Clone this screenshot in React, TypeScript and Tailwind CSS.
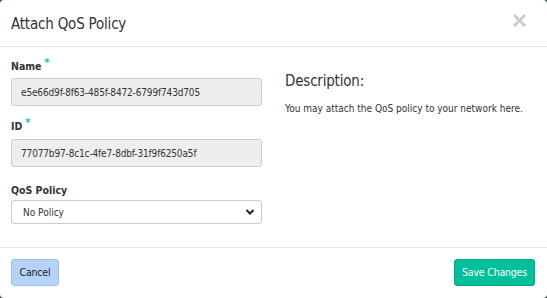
import React from "react";

const font = { fontFamily: '"DejaVu Sans Condensed", "Liberation Sans Narrow", "Liberation Sans", sans-serif' };

export default function App() {
  return (
    <div className="w-[547px] h-[298px] bg-[#2c4a48] overflow-hidden" style={font}>
      <div className="w-[547px] h-[298px] bg-white rounded-[4px] flex flex-col text-[#333333]">
        <div className="h-[47px] border-b border-[#e5e5e5] flex items-center justify-between pl-[11px] pr-[21px]">
          <h4 className="text-[15px] leading-[20px] pt-[2px] tracking-[-0.2px]">Attach QoS Policy</h4>
          <svg width="13" height="13" viewBox="0 0 13 13" className="mb-[5px]">
            <path d="M2 2 L11 11 M11 2 L2 11" stroke="#cccccc" strokeWidth="3" strokeLinecap="square" />
          </svg>
        </div>
        <div className="flex-1 flex px-[11px]">
          <div className="w-[251px] flex flex-col">
            <label className="mt-[12px] text-[10.5px] leading-[14px] font-semibold mb-[5px]">
              Name<span className="text-[#1abc9c] ml-[3px] relative top-[-4px]">*</span>
            </label>
            <div className="h-[28px] bg-[#eeeeee] border border-[#cccccc] rounded-[3px] flex items-center px-[9px] text-[10px] tracking-[-0.15px]">
              e5e66d9f-8f63-485f-8472-6799f743d705
            </div>
            <label className="mt-[13px] text-[10.5px] leading-[14px] font-semibold mb-[6px]">
              ID<span className="text-[#1abc9c] ml-[3px] relative top-[-4px]">*</span>
            </label>
            <div className="h-[28px] bg-[#eeeeee] border border-[#cccccc] rounded-[3px] flex items-center px-[9px] text-[10px] tracking-[-0.15px]">
              77077b97-8c1c-4fe7-8dbf-31f9f6250a5f
            </div>
            <label className="mt-[16px] text-[10.5px] leading-[14px] font-semibold mb-[3px]">QoS Policy</label>
            <div className="h-[24px] bg-white border border-[#cccccc] rounded-[3px] flex items-center justify-between pl-[11px] pr-[6px] text-[10px]">
              <span>No Policy</span>
              <svg width="10" height="8" viewBox="0 0 10 8">
                <path d="M1.5 2 L5 5.5 L8.5 2" fill="none" stroke="#222" strokeWidth="2" />
              </svg>
            </div>
          </div>
          <div className="ml-[23px] flex-1 flex flex-col">
            <h3 className="mt-[24px] text-[15px] leading-[20px] tracking-[-0.2px]">Description:</h3>
            <p className="mt-[11px] text-[10px] leading-[14px]">You may attach the QoS policy to your network here.</p>
          </div>
        </div>
        <div className="h-[51px] border-t border-[#e5e5e5] flex items-start justify-between px-[11px] pt-[11px]">
          <button className="h-[27px] w-[48px] bg-[#b5d2f8] border border-[#9dbff0] rounded-[3px] text-[10.5px] text-[#222] tracking-[-0.2px]">Cancel</button>
          <button className="h-[27px] w-[81px] bg-[#00bf9b] border border-[#00a887] rounded-[3px] text-[10.5px] text-white tracking-[-0.2px] mr-[1px]">Save Changes</button>
        </div>
      </div>
    </div>
  );
}
